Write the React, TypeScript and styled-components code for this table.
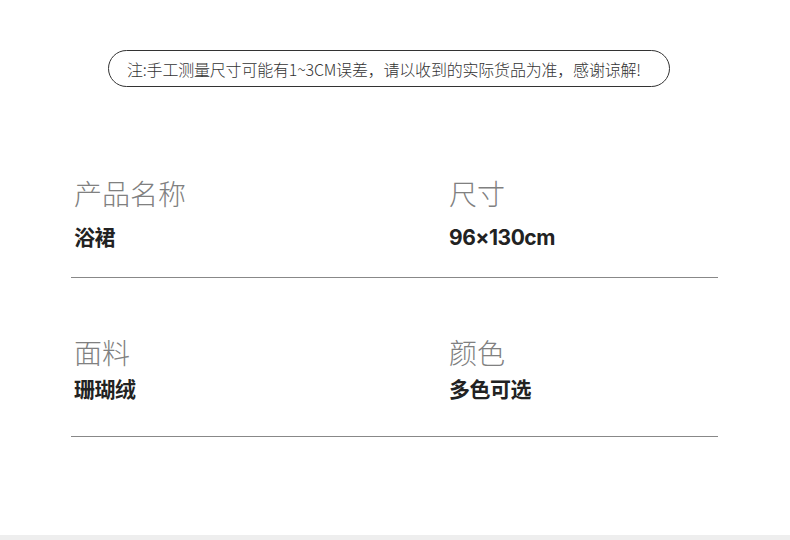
import React from 'react'
import styled, { createGlobalStyle } from 'styled-components'

interface Spec {
    label: string
    value: string
}

interface SpecRow {
    items: Spec[]
    valueGap: number
}

const rows: SpecRow[] = [
    {
        items: [
            { label: '产品名称', value: '浴裙' },
            { label: '尺寸', value: '96×130cm' },
        ],
        valueGap: 13,
    },
    {
        items: [
            { label: '面料', value: '珊瑚绒' },
            { label: '颜色', value: '多色可选' },
        ],
        valueGap: 6,
    },
]

export default function App() {
    return (
        <>
            <GlobalStyle />
            <Page>
                <NoticeRow>
                    <Notice>注:手工测量尺寸可能有1~3CM误差，请以收到的实际货品为准，感谢谅解!</Notice>
                </NoticeRow>
                <SpecTable>
                    {rows.map((row, i) => (
                        <Row key={i}>
                            {row.items.map((item) => (
                                <Cell key={item.label}>
                                    <Label>{item.label}</Label>
                                    <Value gap={row.valueGap}>{item.value}</Value>
                                </Cell>
                            ))}
                        </Row>
                    ))}
                </SpecTable>
                <Footer />
            </Page>
        </>
    )
}

const GlobalStyle = createGlobalStyle`
    body {
        margin: 0;
        background: #ffffff;
        font-family: "Noto Sans CJK SC", "Noto Sans", sans-serif;
    }
`

const Page = styled.div`
    width: 790px;
    height: 540px;
    display: flex;
    flex-direction: column;
    padding-top: 50px;
    box-sizing: border-box;
    overflow: hidden;
`

const NoticeRow = styled.div`
    padding-left: 108px;
`

const Notice = styled.div`
    width: 562px;
    height: 37px;
    box-sizing: border-box;
    border: 1px solid #333333;
    border-radius: 19px;
    display: flex;
    align-items: center;
    padding-left: 18px;
    font-size: 16px;
    font-weight: 300;
    letter-spacing: -0.2px;
    color: #333333;
    white-space: nowrap;
`

const SpecTable = styled.div`
    margin-left: 71px;
    width: 647px;
    margin-top: 32px;
`

const Row = styled.div`
    display: grid;
    grid-template-columns: 375px 1fr;
    height: 159px;
    border-bottom: 1px solid #888888;
    padding-top: 56px;
    box-sizing: border-box;
`

const Cell = styled.div`
    display: flex;
    flex-direction: column;
    padding-left: 3px;
`

const Label = styled.div`
    font-size: 28px;
    line-height: 36px;
    font-weight: 300;
    color: #808080;
`

const Value = styled.div<{ gap: number }>`
    margin-top: ${(p) => p.gap}px;
    font-family: Inter, "Noto Sans CJK SC", sans-serif;
    font-size: 21px;
    line-height: 28px;
    font-weight: 700;
    letter-spacing: -0.5px;
    color: #222222;
`

const Footer = styled.div`
    margin-top: auto;
    height: 5px;
    background: #eeeeee;
`
